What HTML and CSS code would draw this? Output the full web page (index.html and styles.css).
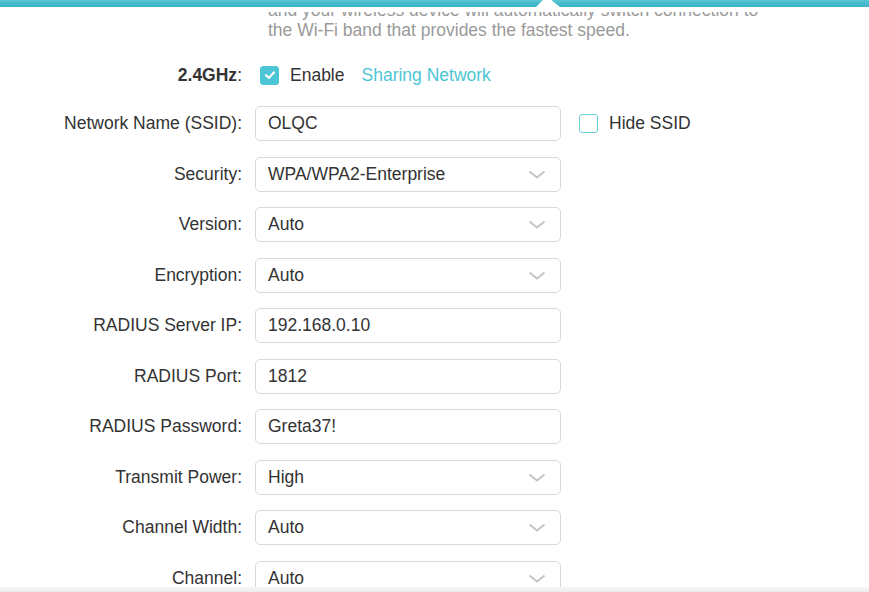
FILE: index.html
```html
<!DOCTYPE html>
<html lang="en">
<head>
<meta charset="utf-8">
<title>Wireless Settings</title>
<link rel="stylesheet" href="styles.css">
</head>
<body>
<header class="topbar">
  <div class="strip"></div>
  <svg class="notch" width="30" height="8" viewBox="0 0 30 8"><polygon points="3,8 11,0 17,0 27,8" fill="#fff"/></svg>
</header>
<main class="content">
  <p class="desc">and your wireless device will automatically switch connection to<br>the Wi-Fi band that provides the fastest speed.</p>
  <div class="form">
    <div class="row band">
      <div class="label"><b>2.4GHz</b>:</div>
      <div class="band-ctl">
        <span class="check checked"><svg width="12" height="10" viewBox="0 0 12 10"><path d="M2 5.2 L4.8 8 L10 2.4" fill="none" stroke="#fff" stroke-width="2.2" stroke-linecap="round" stroke-linejoin="round"/></svg></span>
        <span class="opt">Enable</span>
        <span class="link">Sharing Network</span>
      </div>
    </div>
    <div class="row">
      <div class="label">Network Name (SSID):</div>
      <div class="field">OLQC</div>
      <div class="extra"><span class="check"></span><span class="opt">Hide SSID</span></div>
    </div>
    <div class="row">
      <div class="label">Security:</div>
      <div class="field select">WPA/WPA2-Enterprise<svg class="chev" width="18" height="9" viewBox="0 0 18 9"><path d="M1.5 1.5 L9 7.5 L16.5 1.5" fill="none" stroke="#c4c4c4" stroke-width="2"/></svg></div>
    </div>
    <div class="row">
      <div class="label">Version:</div>
      <div class="field select">Auto<svg class="chev" width="18" height="9" viewBox="0 0 18 9"><path d="M1.5 1.5 L9 7.5 L16.5 1.5" fill="none" stroke="#c4c4c4" stroke-width="2"/></svg></div>
    </div>
    <div class="row">
      <div class="label">Encryption:</div>
      <div class="field select">Auto<svg class="chev" width="18" height="9" viewBox="0 0 18 9"><path d="M1.5 1.5 L9 7.5 L16.5 1.5" fill="none" stroke="#c4c4c4" stroke-width="2"/></svg></div>
    </div>
    <div class="row">
      <div class="label">RADIUS Server IP:</div>
      <div class="field">192.168.0.10</div>
    </div>
    <div class="row">
      <div class="label">RADIUS Port:</div>
      <div class="field">1812</div>
    </div>
    <div class="row">
      <div class="label">RADIUS Password:</div>
      <div class="field">Greta37!</div>
    </div>
    <div class="row">
      <div class="label">Transmit Power:</div>
      <div class="field select">High<svg class="chev" width="18" height="9" viewBox="0 0 18 9"><path d="M1.5 1.5 L9 7.5 L16.5 1.5" fill="none" stroke="#c4c4c4" stroke-width="2"/></svg></div>
    </div>
    <div class="row">
      <div class="label">Channel Width:</div>
      <div class="field select">Auto<svg class="chev" width="18" height="9" viewBox="0 0 18 9"><path d="M1.5 1.5 L9 7.5 L16.5 1.5" fill="none" stroke="#c4c4c4" stroke-width="2"/></svg></div>
    </div>
    <div class="row">
      <div class="label">Channel:</div>
      <div class="field select">Auto<svg class="chev" width="18" height="9" viewBox="0 0 18 9"><path d="M1.5 1.5 L9 7.5 L16.5 1.5" fill="none" stroke="#c4c4c4" stroke-width="2"/></svg></div>
    </div>
  </div>
</main>
<div class="footer-shade"></div>
</body>
</html>
```
FILE: styles.css
```css
html, body {
  margin: 0;
  padding: 0;
  background: #fff;
  overflow: hidden;
}
body {
  font-family: "Liberation Sans", Arial, sans-serif;
  font-size: 17.5px;
  color: #333;
  width: 869px;
  height: 592px;
}
.topbar {
  position: fixed;
  top: 0;
  left: 0;
  right: 0;
  height: 12px;
  background: #fff;
  z-index: 2;
}
.topbar .strip {
  height: 7px;
  background: linear-gradient(to bottom, #5cc8d6 0, #48bccc 40%, #40b4c6 100%);
}
.topbar .notch {
  position: absolute;
  left: 533px;
  top: -1px;
}
.desc {
  margin: 0 0 0 268px;
  padding-top: 0;
  line-height: 20px;
  color: #9a9a9a;
  white-space: nowrap;
}
.form {
  display: flex;
  flex-direction: column;
  gap: 15.5px;
  margin-top: 17.5px;
}
.row {
  display: grid;
  grid-template-columns: 242px 306px auto;
  column-gap: 13px;
  align-items: center;
  height: 35px;
}
.row.band {
  margin-bottom: -2px;
}
.label {
  text-align: right;
  white-space: nowrap;
  color: #333;
}
.label b {
  font-weight: bold;
}
.band-ctl {
  display: flex;
  align-items: center;
  padding-left: 5px;
}
.check {
  box-sizing: border-box;
  width: 19px;
  height: 19px;
  border-radius: 3px;
  border: 1.5px solid #6fd0dc;
  display: inline-flex;
  align-items: center;
  justify-content: center;
  flex: none;
}
.check.checked {
  background: #4cc6d5;
  border-color: #4cc6d5;
}
.opt {
  margin-left: 11px;
  color: #333;
}
.link {
  margin-left: 17px;
  color: #4cc6d5;
}
.field {
  box-sizing: border-box;
  height: 35px;
  border: 1px solid #d9d9d9;
  border-radius: 5px;
  padding: 0 12px;
  display: flex;
  align-items: center;
  color: #333;
  background: #fff;
}
.field.select {
  justify-content: space-between;
  padding-right: 14px;
}
.chev {
  flex: none;
}
.extra {
  display: flex;
  align-items: center;
  margin-left: 5px;
}
.footer-shade {
  position: fixed;
  left: 0;
  right: 0;
  bottom: 0;
  height: 5px;
  background: linear-gradient(to bottom, #f7f7f7, #ededed);
  z-index: 2;
}
```
